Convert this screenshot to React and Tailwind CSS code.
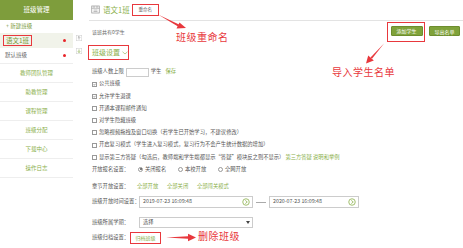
import React from 'react';

const FONT = { fontFamily: '"Noto Sans CJK SC", "Noto Sans", sans-serif' };

function Check({ on }) {
  return (
    <span className="w-[5px] h-[5px] border-[0.5px] border-[#999] bg-white mr-[2px] flex items-center justify-center shrink-0">
      {on && (
        <svg width="5" height="5" viewBox="0 0 10 10">
          <path d="M2 5 L4.2 7.5 L8.5 2.5" fill="none" stroke="#444" strokeWidth="1.8" />
        </svg>
      )}
    </span>
  );
}

function Radio({ on, label }) {
  return (
    <span className="flex items-center w-[40px]">
      <span className="w-[5px] h-[5px] rounded-full border-[0.5px] border-[#999] bg-white mr-[2px] flex items-center justify-center">
        {on && <span className="w-[2px] h-[2px] rounded-full bg-[#555]" />}
      </span>
      {label}
    </span>
  );
}

function Clock() {
  return (
    <svg width="8" height="8" viewBox="0 0 16 16">
      <circle cx="8" cy="8" r="6.5" fill="none" stroke="#8aaf4a" strokeWidth="1.6" />
      <path d="M6.5 4.8 L10.5 8 L6.5 11.2" fill="none" stroke="#8aaf4a" strokeWidth="1.5" />
    </svg>
  );
}

export default function App() {
  const sideLinks = ['教师团队管理', '助教管理', '课程管理', '班级分配', '下载中心', '操作日志'];
  const checks = [
    ['公共班级', true],
    ['允许学生退课', true],
    ['开通本课程邮件通知', false],
    ['对学生隐藏班级', false],
    ['忽略视频拖拽及窗口切换（若学生已开始学习，不建议修改）', false],
    ['开启复习模式（学生进入复习模式，复习行为不会产生统计数据的增加）', false],
  ];

  return (
    <div className="w-[463px] h-[248px] bg-white flex overflow-hidden relative whitespace-nowrap" style={FONT}>
      {/* SIDEBAR */}
      <div className="w-[73px] flex flex-col shrink-0">
        <div className="h-[20px] bg-[#7e9d3c] text-white text-[6.5px] flex items-center justify-center">班级管理</div>
        <div className="h-[13px] flex items-center pl-[6px] text-[5.5px] text-[#7a9a3a]">+ 新建班级</div>
        <div className="h-[15px] bg-[#f1f3ea] flex items-center justify-between pl-[3px] pr-[7px]">
          <span className="border-[1.5px] border-[#e8383d] px-[2px] h-[11px] flex items-center text-[6.5px] text-[#7a9a3a]">语文1班</span>
          <span className="w-[3px] h-[3px] rounded-full bg-[#e8252a]" />
        </div>
        <div className="h-[16px] flex items-center justify-between pl-[5px] pr-[7px] border-b border-[#eee] text-[5.5px] text-[#666]">
          <span>默认班级</span>
          <span className="w-[3px] h-[3px] rounded-full bg-[#e8252a]" />
        </div>
        {sideLinks.map((t) => (
          <div key={t} className="h-[19px] flex items-center justify-center border-b border-[#eee] text-[5.5px] text-[#8aaf4a]">{t}</div>
        ))}
      </div>

      {/* TOGGLE ICONS */}
      <div className="w-[16px] flex flex-col items-center pt-[35px] gap-[7px] pr-[7px] pl-[2px] shrink-0">
        <svg width="6" height="6" viewBox="0 0 12 12">
          <rect x="0.5" y="0.5" width="11" height="11" fill="#fff" stroke="#ccc" />
          <path d="M6 3 L6 9 M3.8 5.2 L6 3 L8.2 5.2" fill="none" stroke="#888" strokeWidth="1.2" />
        </svg>
        <svg width="6" height="6" viewBox="0 0 12 12">
          <rect x="0.5" y="0.5" width="11" height="11" fill="#fff" stroke="#ccc" />
          <path d="M6 3 L6 9 M3.8 6.8 L6 9 L8.2 6.8" fill="none" stroke="#8aaf4a" strokeWidth="1.4" />
        </svg>
      </div>

      {/* MAIN */}
      <div className="flex-1 min-w-0 flex flex-col text-[5.3px] text-[#555] leading-none">
        <div className="h-[21px] border-b border-[#e3e3e3] flex items-center pl-[2px] pb-[1px]">
          <svg width="9" height="9" viewBox="0 0 18 18" className="mr-[3px]">
            <rect x="1.5" y="2" width="15" height="14" fill="none" stroke="#999" strokeWidth="1.5" />
            <path d="M1.5 6.5 H16.5 M5 10 H13 M5 13 H13 M6 2 V6.5 M12 2 V6.5" stroke="#999" strokeWidth="1.3" />
          </svg>
          <span className="text-[7.5px] text-[#8aaf4a]">语文1班</span>
          <span className="ml-[2px] border-[1.5px] border-[#e8383d] h-[12px] w-[27px] flex items-center justify-center text-[4.5px] text-[#666]">重命名</span>
        </div>

        <div className="h-[22px] flex justify-between">
          <span className="self-center pl-[3px] pb-[1px] text-[5px] text-[#666]">该班共有0学生</span>
          <div className="flex items-start pt-[1px] pr-[3px]">
            <span className="border-[1.5px] border-[#e8383d] pl-[2.5px] pr-[1.5px] pt-[2.5px] pb-[5.5px]">
              <span className="w-[32px] h-[10px] bg-[#7fa23a] border border-[#6d8d2e] text-white text-[5px] flex items-center justify-center rounded-[1px]">添加学生</span>
            </span>
            <span className="ml-[4px] mt-[4px] w-[31px] h-[10px] bg-[#7fa23a] border border-[#6d8d2e] text-white text-[5px] flex items-center justify-center rounded-[1px]">导出名单</span>
          </div>
        </div>

        <div className="h-[19px] flex items-center">
          <span className="border-[1.5px] border-[#e8383d] h-[15px] w-[41px] -ml-[1px] flex items-center pl-[3px] text-[7px] text-[#8aaf4a]">
            班级设置
            <svg width="6" height="4" viewBox="0 0 12 8" className="ml-[2px]">
              <path d="M1 1.5 L6 6 L11 1.5" fill="none" stroke="#8aaf4a" strokeWidth="1.2" />
            </svg>
          </span>
        </div>

        <div className="pl-[3px] flex flex-col">
          <div className="h-[12px] mt-[4px] flex items-center">
            <span>班级人数上限</span>
            <span className="ml-[2px] w-[23px] h-[9px] border-[0.5px] border-[#ccc] bg-white" />
            <span className="ml-[2px]">学生</span>
            <span className="ml-[4px] text-[#8aaf4a]">保存</span>
          </div>
          {checks.map(([t, on]) => (
            <div key={t} className="h-[12.2px] flex items-center">
              <Check on={on} />
              <span>{t}</span>
            </div>
          ))}
          <div className="h-[12.2px] flex items-center">
            <Check on={false} />
            <span>显示第三方答疑（勾选后，教师端和学生端都显示“答疑”模块反之则不显示）</span>
            <span className="ml-[1px] text-[#8aaf4a]">第三方答疑 说明和举例</span>
          </div>
          <div className="h-[12.2px] flex items-center">
            <span className="w-[46px] shrink-0">开放报名设置：</span>
            <Radio on label="关闭报名" />
            <Radio label="本校开放" />
            <Radio label="全网开放" />
          </div>
          <div className="h-[12px] mt-[5.4px] flex items-center">
            <span className="w-[45px] shrink-0">章节开放设置：</span>
            <span className="text-[#8aaf4a] w-[30px]">全部开放</span>
            <span className="text-[#8aaf4a] w-[30px]">全部关闭</span>
            <span className="text-[#8aaf4a]">全部闯关模式</span>
          </div>
          <div className="h-[12px] mt-[3px] flex items-center">
            <span className="w-[47px] shrink-0">班级开放时间设置：</span>
            <span className="w-[114px] h-[12px] shrink-0 border-[0.5px] border-[#ccc] flex items-center justify-between pl-[3px] pr-[2px]">
              2019-07-23 16:09:48
              <Clock />
            </span>
            <span className="w-[10px] h-[0.5px] bg-[#aaa] mx-[3px] shrink-0" />
            <span className="w-[90px] h-[12px] shrink-0 border-[0.5px] border-[#ccc] flex items-center justify-between pl-[3px] pr-[2px]">
              2020-07-23 16:09:48
              <Clock />
            </span>
          </div>
          <div className="h-[11px] mt-[9.5px] flex items-center">
            <span className="w-[47px] shrink-0">班级所属学期：</span>
            <span className="w-[114px] h-[11px] shrink-0 border-[0.5px] border-[#ccc] flex items-center justify-between pl-[3px] pr-[2px]">
              选择
              <svg width="4" height="3" viewBox="0 0 8 6">
                <path d="M0 0 H8 L4 6 Z" fill="#444" />
              </svg>
            </span>
          </div>
          <div className="h-[12px] mt-[3.5px] flex items-center">
            <span className="w-[38px] shrink-0">班级归档设置：</span>
            <span className="border-[1.5px] border-[#e8383d] w-[31px] h-[12px] shrink-0 flex items-center justify-center text-[5px] text-[#8aaf4a]">归档班级</span>
          </div>
        </div>
      </div>

      {/* ANNOTATIONS */}
      <svg className="absolute left-0 top-0 pointer-events-none" width="463" height="248" viewBox="0 0 463 248">
        <path d="M158 14.5 L179 24.6 L178 26.4 Z" fill="#e8383d" />
        <path d="M186 28 L176.5 28.4 L179.5 22.4 Z" fill="#e8383d" />
        <path d="M384 43.5 L370.5 57.5 L372 58.8 Z" fill="#e8383d" />
        <path d="M366 63.5 L368.2 55.4 L373.8 60.6 Z" fill="#e8383d" />
        <path d="M166 237.5 L188 236.3 L188 238.7 Z" fill="#e8383d" />
        <path d="M196 237.5 L188 233.8 L188 241.2 Z" fill="#e8383d" />
      </svg>
      <span className="absolute left-[176px] top-[32px] text-[10px] leading-none text-[#e8383d] tracking-[0.5px]">班级重命名</span>
      <span className="absolute left-[332px] top-[67px] text-[10px] leading-none text-[#e8383d] tracking-[0.5px]">导入学生名单</span>
      <span className="absolute left-[198px] top-[231px] text-[10px] leading-none text-[#e8383d] tracking-[0.5px]">删除班级</span>
    </div>
  );
}
